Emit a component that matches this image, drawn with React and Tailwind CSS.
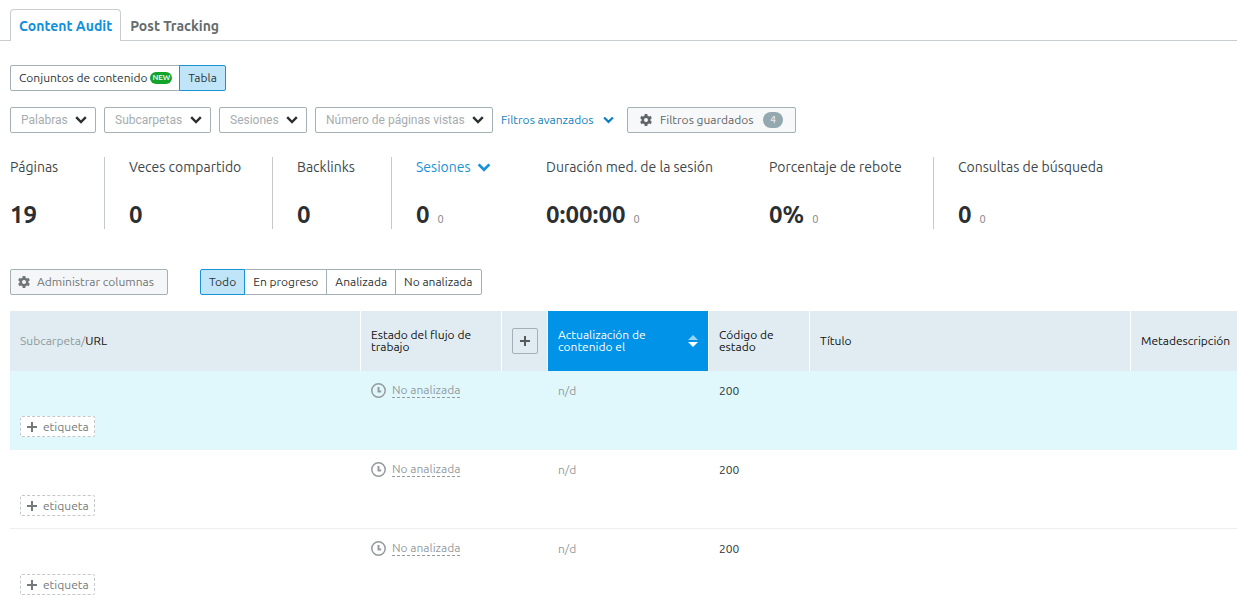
import React, { useState } from "react";

const tabs = ["Content Audit", "Post Tracking"];

const filters = [
  { label: "Palabras", width: "w-[86px]" },
  { label: "Subcarpetas", width: "w-[107px]" },
  { label: "Sesiones", width: "w-[88px]" },
  { label: "Número de páginas vistas", width: "w-[178px]" },
];

const metrics = [
  { label: "Páginas", value: "19", box: "w-[95px] border-r" },
  { label: "Veces compartido", value: "0", box: "w-[168px] pl-6 border-r" },
  { label: "Backlinks", value: "0", box: "w-[119px] pl-6 border-r" },
  { label: "Sesiones", value: "0", delta: "0", link: true, box: "w-[154px] pl-6" },
  { label: "Duración med. de la sesión", value: "0:00:00", delta: "0", box: "w-[223px]" },
  { label: "Porcentaje de rebote", value: "0%", delta: "0", box: "w-[165px] border-r" },
  { label: "Consultas de búsqueda", value: "0", delta: "0", box: "pl-6" },
];

const states = ["Todo", "En progreso", "Analizada", "No analizada"];

const rows = [
  { id: 1, status: "No analizada", updated: "n/d", code: "200" },
  { id: 2, status: "No analizada", updated: "n/d", code: "200" },
  { id: 3, status: "No analizada", updated: "n/d", code: "200" },
];

const Chevron = ({ className }) => (
  <svg className={className} viewBox="0 0 12 8" fill="none" stroke="currentColor" strokeWidth="2.4">
    <path d="M1.2 1.2L6 6l4.8-4.8" />
  </svg>
);

const Gear = () => (
  <svg className="h-3 w-3 shrink-0" viewBox="0 0 12 12" fill="none" stroke="currentColor">
    <circle cx="6" cy="6" r="3.3" strokeWidth="2.6" />
    <path
      strokeWidth="2.8"
      d="M6 0v2.2M6 9.8V12M.8 3l1.9 1.1M9.3 7.9L11.2 9M.8 9l1.9-1.1M9.3 4.1L11.2 3"
    />
  </svg>
);

const Plus = () => (
  <svg className="h-[10px] w-[10px] shrink-0" viewBox="0 0 10 10" fill="currentColor">
    <path d="M4 0h2v4h4v2H6v4H4V6H0V4h4z" />
  </svg>
);

const Clock = () => (
  <svg className="h-[15px] w-[15px] shrink-0" viewBox="0 0 15 15" fill="none" stroke="currentColor">
    <circle cx="7.5" cy="7.5" r="6.7" strokeWidth="1.5" />
    <path d="M7.5 4v4.6h2.7" strokeWidth="2" />
  </svg>
);

const Sorter = () => (
  <svg className="h-3 w-[10px] shrink-0" viewBox="0 0 10 12" fill="currentColor">
    <path d="M5 0l5 5H0z" opacity="0.6" />
    <path d="M5 12L0 7h10z" />
  </svg>
);

const FilterSelect = ({ label, width }) => (
  <div className={`relative h-[26px] ${width}`}>
    <select
      aria-label={label}
      className="h-full w-full appearance-none rounded-xs border border-[#a3b0b4] bg-white pl-[10px] font-['Roboto','Liberation_Sans',sans-serif] text-xs text-[#a6adb0]"
    >
      <option>{label}</option>
    </select>
    <Chevron className="pointer-events-none absolute top-[9px] right-[9px] h-2 w-3 text-[#2b2f31]" />
  </div>
);

const Metric = ({ label, value, delta, link, box }) => (
  <div className={`h-[72px] shrink-0 border-[#c4cacd] ${box}`}>
    {link ? (
      <button className="flex h-5 items-center gap-[6px] text-sm text-[#1a92d6]">
        {label}
        <Chevron className="h-[9px] w-[14px]" />
      </button>
    ) : (
      <div className="h-5 text-sm leading-5 whitespace-nowrap text-[#3d474b]">{label}</div>
    )}
    <div className="mt-6 flex items-baseline gap-2 leading-7">
      <span className="text-2xl leading-7 font-bold text-[#2b2f31]">{value}</span>
      {delta && <span className="text-[11px] text-[#7f8587]">{delta}</span>}
    </div>
  </div>
);

const App = () => {
  const [tab, setTab] = useState(tabs[0]);
  const [state, setState] = useState(states[0]);

  return (
    <div className="min-h-screen overflow-x-hidden bg-white font-['Ubuntu','Noto_Sans',sans-serif] text-xs text-[#2b3336]">
      <nav className="flex border-b border-[#c9cdcf] pt-[9px] pl-[10px]">
        {tabs.map((name) => (
          <button
            key={name}
            onClick={() => setTab(name)}
            className={`-mb-px h-8 rounded-t-sm border border-b-0 px-2 text-sm font-bold whitespace-nowrap ${
              name === tab
                ? "border-[#c9cdcf] bg-white text-[#0f8fdc]"
                : "border-transparent text-[#666b6d]"
            }`}
          >
            {name}
          </button>
        ))}
      </nav>

      <main className="pt-6 pl-[10px]">
        <div className="flex">
          <button className="flex h-[26px] w-[170px] items-center gap-[3px] rounded-l-xs border border-[#a3b0b4] pl-2 whitespace-nowrap">
            Conjuntos de contenido
            <span className="h-3 rounded-md bg-[#12a32b] px-[2px] text-[8px] leading-3 font-medium text-white">
              NEW
            </span>
          </button>
          <button className="-ml-px h-[26px] w-[47px] rounded-r-xs border border-[#1a92d6] bg-[#c1e5f8]">
            Tabla
          </button>
        </div>

        <div className="mt-4 flex items-center gap-2">
          {filters.map((f) => (
            <FilterSelect key={f.label} {...f} />
          ))}
          <button className="flex w-[118px] items-center justify-between pr-[5px] whitespace-nowrap text-[#0f7fc0]">
            Filtros avanzados
            <Chevron className="h-2 w-[11px]" />
          </button>
          <button className="flex h-[26px] w-[169px] items-center rounded-xs border border-[#a3b0b4] bg-[#f6f8f9] px-3 whitespace-nowrap text-[#5f6567]">
            <Gear />
            <span className="ml-2">Filtros guardados</span>
            <span className="ml-auto h-4 w-5 rounded-full bg-[#94a8b0] text-[10px] leading-4 text-white">
              4
            </span>
          </button>
        </div>

        <section className="mt-6 flex">
          {metrics.map((m) => (
            <Metric key={m.label} {...m} />
          ))}
        </section>

        <div className="mt-10 flex gap-8">
          <button className="flex h-[26px] w-[158px] items-center gap-[7px] rounded-xs border border-[#a3b0b4] bg-[#f5f6f7] px-[7px] whitespace-nowrap text-[#6f7577]">
            <Gear />
            Administrar columnas
          </button>
          <div className="flex">
            {states.map((name) => (
              <button
                key={name}
                onClick={() => setState(name)}
                className={`-ml-px h-[26px] border px-2 whitespace-nowrap first:ml-0 first:rounded-l-xs last:rounded-r-xs ${
                  name === state
                    ? "relative border-[#1a92d6] bg-[#c1e5f8]"
                    : "border-[#a3b0b4] bg-white"
                }`}
              >
                {name}
              </button>
            ))}
          </div>
        </div>

        <table className="mt-4 w-full table-fixed border-separate border-spacing-0 text-left">
          <colgroup>
            <col className="w-[351px]" />
            <col className="w-[141px]" />
            <col className="w-[46px]" />
            <col className="w-[161px]" />
            <col className="w-[101px]" />
            <col className="w-[321px]" />
            <col />
          </colgroup>
          <thead className="bg-[#e0ecf1] leading-3 text-[#111]">
            <tr className="h-[60px] *:border-r *:border-white *:px-[10px] *:font-normal *:last:border-r-0">
              <th>
                <span className="text-[#8d999e]">Subcarpeta/</span>URL
              </th>
              <th>Estado del flujo de trabajo</th>
              <th>
                <button
                  aria-label="Añadir columna"
                  className="flex h-[26px] w-[26px] items-center justify-center rounded-xs border border-[#a3b0b4] text-[#555b5d]"
                >
                  <Plus />
                </button>
              </th>
              <th className="bg-[#0093e8] text-white">
                <button className="flex w-full items-center justify-between gap-4 text-left">
                  Actualización de contenido el
                  <Sorter />
                </button>
              </th>
              <th>Código de estado</th>
              <th>Título</th>
              <th className="whitespace-nowrap">Metadescripción</th>
            </tr>
          </thead>
          <tbody>
            {rows.map((row) => (
              <tr
                key={row.id}
                className="h-[79px] align-top *:border-b *:border-[#eceeef] first:bg-[#e0f8fc] first:*:border-[#e0f8fc] last:*:border-b-0"
              >
                <td className="px-[10px] pt-[45px]">
                  <button className="flex h-[21px] w-[75px] items-center gap-[6px] rounded-xs border border-dashed border-[#c4c8ca] bg-white px-[6px] text-[#757b7d]">
                    <Plus />
                    etiqueta
                  </button>
                </td>
                <td className="px-[10px] pt-3">
                  <button className="flex items-center gap-[6px] whitespace-nowrap text-[#939b9e]">
                    <Clock />
                    <span className="border-b border-dashed border-[#939b9e] leading-[14px]">
                      {row.status}
                    </span>
                  </button>
                </td>
                <td />
                <td className="px-[10px] pt-3 text-[#939b9e]">{row.updated}</td>
                <td className="px-[10px] pt-3">{row.code}</td>
                <td />
                <td />
              </tr>
            ))}
          </tbody>
        </table>
      </main>
    </div>
  );
};

export default App;
